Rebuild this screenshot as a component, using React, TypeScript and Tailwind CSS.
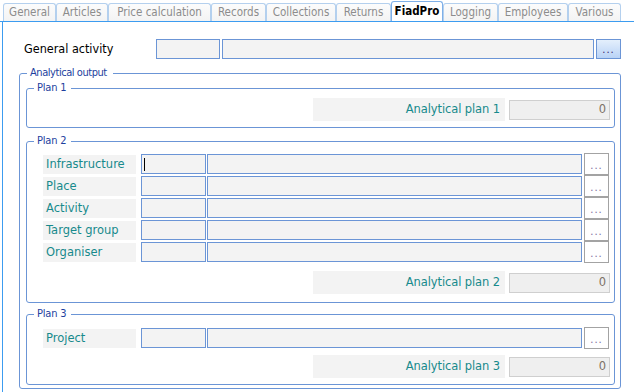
import React from "react";

const TABS: { name: string; w: string; selected?: boolean }[] = [
  { name: "General", w: "w-[53px]" },
  { name: "Articles", w: "w-[52px]" },
  { name: "Price calculation", w: "w-[103px]" },
  { name: "Records", w: "w-[55px]" },
  { name: "Collections", w: "w-[70px]" },
  { name: "Returns", w: "w-[55px]" },
  { name: "FiadPro", w: "w-[52px]", selected: true },
  { name: "Logging", w: "w-[55px]" },
  { name: "Employees", w: "w-[70px]" },
  { name: "Various", w: "w-[53px]" },
];

const tahoma = { fontFamily: '"DejaVu Sans Condensed", "DejaVu Sans", sans-serif' };
const verdana = { fontFamily: '"DejaVu Sans", Verdana, sans-serif' };

function Legend({
  text,
  ml = "ml-[7px]",
  px = "pl-[3px] pr-[5px]",
  track = "tracking-[-0.2px]",
}: {
  text: string;
  ml?: string;
  px?: string;
  track?: string;
}) {
  return (
    <div
      className={`-mt-[8px] h-[14px] w-fit bg-white ${ml} ${px} ${track} text-[11px] leading-[14px] text-[#1e3f9e]`}
      style={tahoma}
    >
      {text}
    </div>
  );
}

function SmallButton() {
  return (
    <div className="-my-[1px] ml-[2px] flex h-[22px] w-[25px] items-end justify-center border border-[#a3a3a3] bg-white pb-[3px]">
      <span className="text-[10px] leading-[10px] tracking-[1px] text-[#7d6a9c]" style={verdana}>...</span>
    </div>
  );
}

function LookupRow({ label, cursor }: { label: string; cursor?: boolean }) {
  return (
    <div className="flex h-[20px] items-center">
      <div
        className="ml-[16px] flex h-[19px] w-[93px] items-center self-end bg-[#f3f3f3] pl-[3px] pt-[1px] text-[11.5px] text-[#178a8c]"
        style={verdana}
      >
        {label}
      </div>
      <div className="ml-[5px] flex h-[20px] w-[65px] items-center border border-[#6b95d6] bg-[#f3f3f3]">
        {cursor && <div className="ml-[2px] h-[13px] w-[1px] bg-black" />}
      </div>
      <div className="ml-[1px] h-[20px] w-[375px] border border-[#6b95d6] bg-[#f3f3f3]" />
      <SmallButton />
    </div>
  );
}

function AnalyticalRow({ n }: { n: number }) {
  return (
    <div className="flex h-[23px] items-center justify-end pr-[4px]">
      <div
        className="flex h-[23px] w-[192px] items-center justify-end bg-[#f3f3f3] pr-[5px] text-[11.5px] tracking-[-0.1px] text-[#178a8c]"
        style={verdana}
      >
        Analytical plan {n}
      </div>
      <div
        className="ml-[4px] flex h-[20px] w-[101px] items-center justify-end border border-[#cfcfcf] bg-[#efefef] pr-[3px] text-[11.5px] text-[#7d7266]"
        style={verdana}
      >
        0
      </div>
    </div>
  );
}

export default function App() {
  return (
    <div className="flex h-[392px] w-[634px] flex-col overflow-hidden bg-white">
      {/* Tab strip */}
      <div className="flex h-[22px] items-end border-b border-[#3c9cf0] pl-[3px]">
        {TABS.map((t) =>
          t.selected ? (
            <div
              key={t.name}
              className={`${t.w} flex h-[20px] items-center justify-center rounded-t-[3px] border border-b-0 border-[#7fb0e8] bg-white pt-[1px] text-[11.5px] font-bold text-black`}
              style={tahoma}
            >
              {t.name}
            </div>
          ) : (
            <div
              key={t.name}
              className={`${t.w} flex h-[18px] items-center justify-center rounded-t-[3px] border border-b-0 border-[#b4d0ee] bg-gradient-to-b from-[#fcfcfc] to-[#f3f3f3] pt-[1px] text-[11.5px] text-[#8c8c8c]`}
              style={tahoma}
            >
              {t.name}
            </div>
          )
        )}
      </div>

      {/* Panel */}
      <div className="ml-[2px] flex-1 border-l border-[#3c9cf0]">
        {/* General activity */}
        <div className="mt-[17px] flex h-[20px] items-center pl-[21px]">
          <div className="w-[132px] text-[12.5px] text-black" style={tahoma}>
            General activity
          </div>
          <div className="h-[20px] w-[64px] border border-[#6b95d6] bg-[#f3f3f3]" />
          <div className="ml-[2px] h-[20px] w-[372px] border border-[#6b95d6] bg-[#f3f3f3]" />
          <div className="ml-[2px] flex h-[20px] w-[25px] items-end justify-center border border-[#6b95d6] bg-gradient-to-b from-[#e4effc] to-[#b9d3f6] pb-[3px]">
            <span className="text-[10px] leading-[10px] tracking-[1px] text-[#3a1f6e]" style={verdana}>...</span>
          </div>
        </div>

        {/* Analytical output */}
        <div className="ml-[16px] mt-[14px] w-[602px] rounded-[3px] border border-[#6b95d6] pb-[3px] pl-[6px] pr-[5px]">
          <Legend text="Analytical output" ml="ml-[1px]" px="pl-[3px] pr-[6px]" track="tracking-[-0.45px]" />

          {/* Plan 1 */}
          <div className="mt-[8px] rounded-[3px] border border-[#6b95d6] pb-[6px]">
            <Legend text="Plan 1" />
            <div className="mt-[3px]">
              <AnalyticalRow n={1} />
            </div>
          </div>

          {/* Plan 2 */}
          <div className="mt-[13px] rounded-[3px] border border-[#6b95d6] pb-[8px]">
            <Legend text="Plan 2" />
            <div className="mt-[6px] flex flex-col gap-[2px]">
              <LookupRow label="Infrastructure" cursor />
              <LookupRow label="Place" />
              <LookupRow label="Activity" />
              <LookupRow label="Target group" />
              <LookupRow label="Organiser" />
            </div>
            <div className="mt-[9px]">
              <AnalyticalRow n={2} />
            </div>
          </div>

          {/* Plan 3 */}
          <div className="mt-[11px] rounded-[3px] border border-[#6b95d6] pb-[6px]">
            <Legend text="Plan 3" />
            <div className="mt-[7px]">
              <LookupRow label="Project" />
            </div>
            <div className="mt-[7px]">
              <AnalyticalRow n={3} />
            </div>
          </div>
        </div>
      </div>
    </div>
  );
}
